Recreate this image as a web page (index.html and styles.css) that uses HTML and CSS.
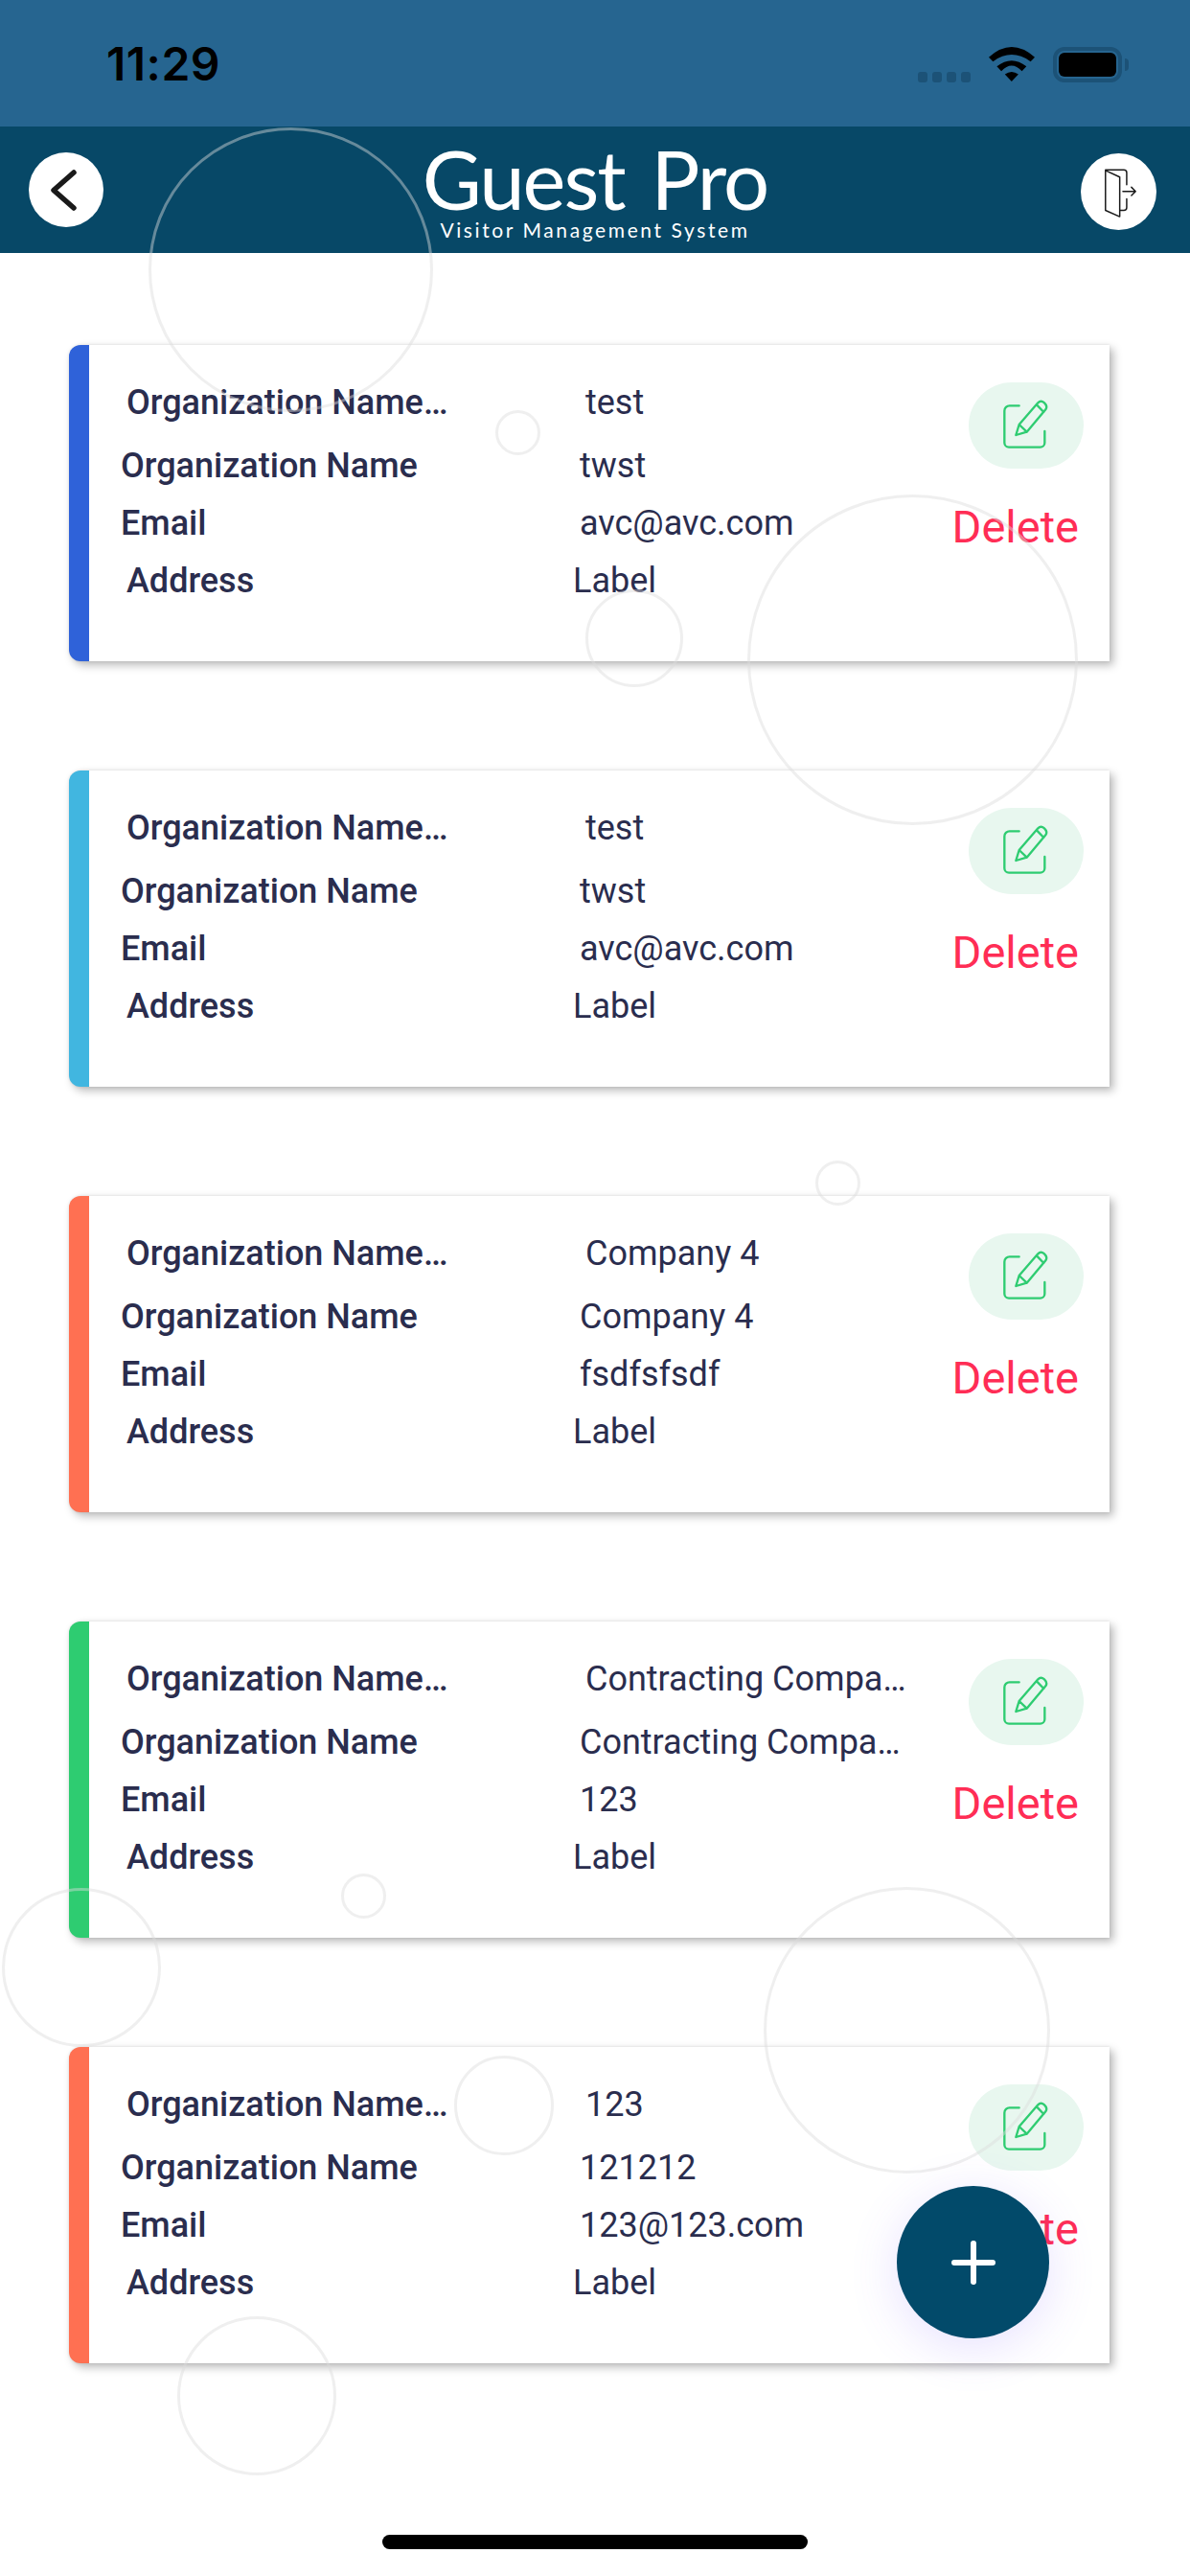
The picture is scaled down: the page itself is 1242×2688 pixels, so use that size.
FILE: index.html
```html
<!DOCTYPE html>
<html lang="en">
<head>
<meta charset="utf-8">
<title>Guest Pro</title>
<link rel="stylesheet" href="styles.css">
</head>
<body>
<div class="page">
  <div class="status">
    <span class="time">11:29</span>
    <div class="status-icons">
      <div class="signal"><i></i><i></i><i></i><i></i></div>
      <svg class="wifi" viewBox="35 28 143 107" width="48" height="36"><path d="M35 60Q106-4 178 60L165 73Q106 31 48 73Z"/><path d="M60 88Q106 52 152 88L138 103Q106 69 74 103Z"/><path d="M85 113Q106 97 127 113L106 135Z"/></svg>
      <div class="battery"><div class="battery-fill"></div></div>
      <div class="battery-cap"></div>
    </div>
  </div>
  <header class="header">
    <button class="round-btn">
      <svg viewBox="0 0 78 78" width="78" height="78"><path class="chev" d="M47 21L26 39.5L47 58"/></svg>
    </button>
    <div class="logo">
      <div class="logo-main">Guest Pro</div>
      <div class="logo-sub">Visitor Management System</div>
    </div>
    <button class="round-btn exit">
      <svg viewBox="21 28 237 242" width="79" height="80"><path class="door" d="M98 82L143 103V228L98 208ZM98 80H156Q165 80 165 89V127M165 172V199Q165 208 156 208H143M153 148H192M180 135L193 148L180 161"/></svg>
    </button>
  </header>
  <main class="list">
    <article class="card blue">
      <div class="rows">
        <div class="row r1"><span class="label">Organization Name…</span><span class="value">test</span></div>
        <div class="row r2"><span class="label">Organization Name</span><span class="value">twst</span></div>
        <div class="row r2"><span class="label">Email</span><span class="value">avc@avc.com</span></div>
        <div class="row r4"><span class="label">Address</span><span class="value">Label</span></div>
      </div>
      <div class="actions">
        <button class="edit"><svg viewBox="0 0 300 300" width="100" height="100"><path class="pen" d="M128 88H98A16 16 0 0 0 82 104V204A14 14 0 0 0 96 218H194A14 14 0 0 0 208 204V168M118 180L128 147L187 79Q196 70 207 79Q218 90 211 100L152 170ZM128 147L152 170M183 85L205 108"/></svg></button>
        <span class="delete">Delete</span>
      </div>
    </article>
    <article class="card sky">
      <div class="rows">
        <div class="row r1"><span class="label">Organization Name…</span><span class="value">test</span></div>
        <div class="row r2"><span class="label">Organization Name</span><span class="value">twst</span></div>
        <div class="row r2"><span class="label">Email</span><span class="value">avc@avc.com</span></div>
        <div class="row r4"><span class="label">Address</span><span class="value">Label</span></div>
      </div>
      <div class="actions">
        <button class="edit"><svg viewBox="0 0 300 300" width="100" height="100"><path class="pen" d="M128 88H98A16 16 0 0 0 82 104V204A14 14 0 0 0 96 218H194A14 14 0 0 0 208 204V168M118 180L128 147L187 79Q196 70 207 79Q218 90 211 100L152 170ZM128 147L152 170M183 85L205 108"/></svg></button>
        <span class="delete">Delete</span>
      </div>
    </article>
    <article class="card coral">
      <div class="rows">
        <div class="row r1"><span class="label">Organization Name…</span><span class="value">Company 4</span></div>
        <div class="row r2"><span class="label">Organization Name</span><span class="value">Company 4</span></div>
        <div class="row r2"><span class="label">Email</span><span class="value">fsdfsfsdf</span></div>
        <div class="row r4"><span class="label">Address</span><span class="value">Label</span></div>
      </div>
      <div class="actions">
        <button class="edit"><svg viewBox="0 0 300 300" width="100" height="100"><path class="pen" d="M128 88H98A16 16 0 0 0 82 104V204A14 14 0 0 0 96 218H194A14 14 0 0 0 208 204V168M118 180L128 147L187 79Q196 70 207 79Q218 90 211 100L152 170ZM128 147L152 170M183 85L205 108"/></svg></button>
        <span class="delete">Delete</span>
      </div>
    </article>
    <article class="card green">
      <div class="rows">
        <div class="row r1"><span class="label">Organization Name…</span><span class="value">Contracting Compa…</span></div>
        <div class="row r2"><span class="label">Organization Name</span><span class="value">Contracting Compa…</span></div>
        <div class="row r2"><span class="label">Email</span><span class="value">123</span></div>
        <div class="row r4"><span class="label">Address</span><span class="value">Label</span></div>
      </div>
      <div class="actions">
        <button class="edit"><svg viewBox="0 0 300 300" width="100" height="100"><path class="pen" d="M128 88H98A16 16 0 0 0 82 104V204A14 14 0 0 0 96 218H194A14 14 0 0 0 208 204V168M118 180L128 147L187 79Q196 70 207 79Q218 90 211 100L152 170ZM128 147L152 170M183 85L205 108"/></svg></button>
        <span class="delete">Delete</span>
      </div>
    </article>
    <article class="card coral">
      <div class="rows">
        <div class="row r1"><span class="label">Organization Name…</span><span class="value">123</span></div>
        <div class="row r2"><span class="label">Organization Name</span><span class="value">121212</span></div>
        <div class="row r2"><span class="label">Email</span><span class="value">123@123.com</span></div>
        <div class="row r4"><span class="label">Address</span><span class="value">Label</span></div>
      </div>
      <div class="actions">
        <button class="edit"><svg viewBox="0 0 300 300" width="100" height="100"><path class="pen" d="M128 88H98A16 16 0 0 0 82 104V204A14 14 0 0 0 96 218H194A14 14 0 0 0 208 204V168M118 180L128 147L187 79Q196 70 207 79Q218 90 211 100L152 170ZM128 147L152 170M183 85L205 108"/></svg></button>
        <span class="delete">Delete</span>
      </div>
    </article>
  </main>
  <div class="bubbles">
    <span class="bubble b1"></span>
    <span class="bubble b2"></span>
    <span class="bubble b3"></span>
    <span class="bubble b4"></span>
    <span class="bubble b5"></span>
    <span class="bubble b6"></span>
    <span class="bubble b7"></span>
    <span class="bubble b8"></span>
    <span class="bubble b9"></span>
    <span class="bubble b10"></span>
  </div>
  <button class="fab"><svg viewBox="0 0 46 46" width="46" height="46"><path class="plus" d="M23 3V43M3 23H43"/></svg></button>
  <div class="home-bar"></div>
</div>
</body>
</html>
```

FILE: styles.css
```css
* { box-sizing: border-box; }
html, body { margin: 0; padding: 0; background: #fff; }
.page {
  position: relative;
  width: 1242px;
  height: 2688px;
  overflow: hidden;
  background: #fff;
  font-family: Roboto, "Liberation Sans", sans-serif;
  color: #2a2d4e;
}
button { border: 0; padding: 0; margin: 0; background: none; display: flex; align-items: center; justify-content: center; }

/* status bar */
.status {
  height: 132px;
  background: #266590;
  display: flex;
  justify-content: space-between;
  padding: 0 64px 0 111px;
}
.time {
  font-family: Inter, "Liberation Sans", sans-serif;
  font-weight: 600;
  font-size: 48px;
  line-height: 56px;
  letter-spacing: 0.5px;
  color: #000;
  padding-top: 39px;
}
.status-icons { display: flex; align-items: flex-start; padding-top: 49px; }
.signal { display: flex; gap: 5px; margin-top: 26px; margin-right: 19px; }
.signal i { width: 10px; height: 11px; border-radius: 3px; background: #1c5277; }
.wifi { fill: #000; margin-right: 19px; display: block; }
.battery {
  width: 72px;
  height: 37px;
  border: 4px solid #1c5277;
  border-radius: 12px;
  padding: 2px;
}
.battery-fill { width: 100%; height: 100%; background: #000; border-radius: 6px; }
.battery-cap {
  width: 4px;
  height: 13px;
  margin: 12px 0 0 3px;
  background: #1c5277;
  border-radius: 0 6px 6px 0;
}

/* header */
.header {
  height: 132px;
  background: #074867;
  display: flex;
  justify-content: space-between;
  align-items: center;
  padding: 0 35px 0 30px;
}
.round-btn {
  width: 78px;
  height: 78px;
  border-radius: 50%;
  background: #fff;
}
.round-btn.exit { width: 79px; height: 80px; margin-top: 3px; }
.chev { fill: none; stroke: #1a1a1a; stroke-width: 5.5; stroke-linecap: round; stroke-linejoin: round; }
.door { fill: none; stroke: #1a1a1a; stroke-width: 4.5; stroke-linecap: round; stroke-linejoin: round; }
.logo { color: #fff; font-family: Lato, "Open Sans", sans-serif; text-align: center; white-space: nowrap; margin-left: 6px; }
.logo-main { font-size: 85px; line-height: 84px; letter-spacing: -2px; word-spacing: 8px; }
.logo-sub { font-size: 21px; line-height: 24px; letter-spacing: 2.6px; }

/* list */
.list { display: flex; flex-direction: column; gap: 114px; padding: 96px 84px 0 72px; }
.card {
  height: 330px;
  background: #fff;
  display: flex;
  justify-content: space-between;
  border-left: 21px solid #2f62d9;
  border-radius: 12px 0 0 12px;
  box-shadow: 4px 4px 10px rgba(0,0,0,.28), 0 0 3px rgba(0,0,0,.1);
}
.card.blue { border-left-color: #2f62d9; }
.card.sky { border-left-color: #41b6e0; }
.card.coral { border-left-color: #ff7052; }
.card.green { border-left-color: #2ecc71; }
.rows { padding-top: 30px; }
.row { display: flex; height: 60px; line-height: 60px; font-size: 36px; white-space: nowrap; }
.label { font-weight: 500; flex: none; }
.value { font-weight: 400; }
.r1 { padding-left: 39px; margin-bottom: 6px; }
.r1 .label { width: 479px; }
.r2 { padding-left: 33px; }
.r2 .label { width: 479px; }
.r4 { padding-left: 39px; }
.r4 .label { width: 466px; }
.actions { display: flex; flex-direction: column; align-items: flex-end; padding: 39px 27px 0 0; }
.edit { width: 120px; height: 90px; border-radius: 45px; background: #e8f7ef; }
.pen { fill: none; stroke: #2ecc71; stroke-width: 7; stroke-linecap: round; stroke-linejoin: round; }
.delete { font-size: 47px; line-height: 52px; color: #ff2d55; margin: 35px 5px 0 0; }

/* decorative rings */
.bubbles { position: absolute; inset: 0; pointer-events: none; }
.bubble { position: absolute; border: 3px solid rgba(220,220,220,.45); border-radius: 50%; }
.b1 { left: 155px; top: 133px; width: 297px; height: 297px; }
.b2 { left: 517px; top: 428px; width: 47px; height: 47px; }
.b3 { left: 611px; top: 615px; width: 102px; height: 102px; }
.b4 { left: 780px; top: 516px; width: 345px; height: 345px; }
.b5 { left: 851px; top: 1211px; width: 47px; height: 47px; }
.b6 { left: 356px; top: 1955px; width: 47px; height: 47px; }
.b7 { left: 2px; top: 1970px; width: 166px; height: 166px; }
.b8 { left: 474px; top: 2145px; width: 104px; height: 104px; }
.b9 { left: 185px; top: 2417px; width: 166px; height: 166px; }
.b10 { left: 797px; top: 1969px; width: 299px; height: 299px; }

/* floating button */
.fab {
  position: absolute;
  left: 936px;
  top: 2281px;
  width: 159px;
  height: 159px;
  border-radius: 50%;
  background: #024a6a;
  box-shadow: 0 10px 50px rgba(110,80,255,.17);
}
.plus { fill: none; stroke: #fff; stroke-width: 6; stroke-linecap: round; }
.home-bar {
  position: absolute;
  left: 399px;
  top: 2645px;
  width: 444px;
  height: 15px;
  border-radius: 8px;
  background: #000;
}
```
